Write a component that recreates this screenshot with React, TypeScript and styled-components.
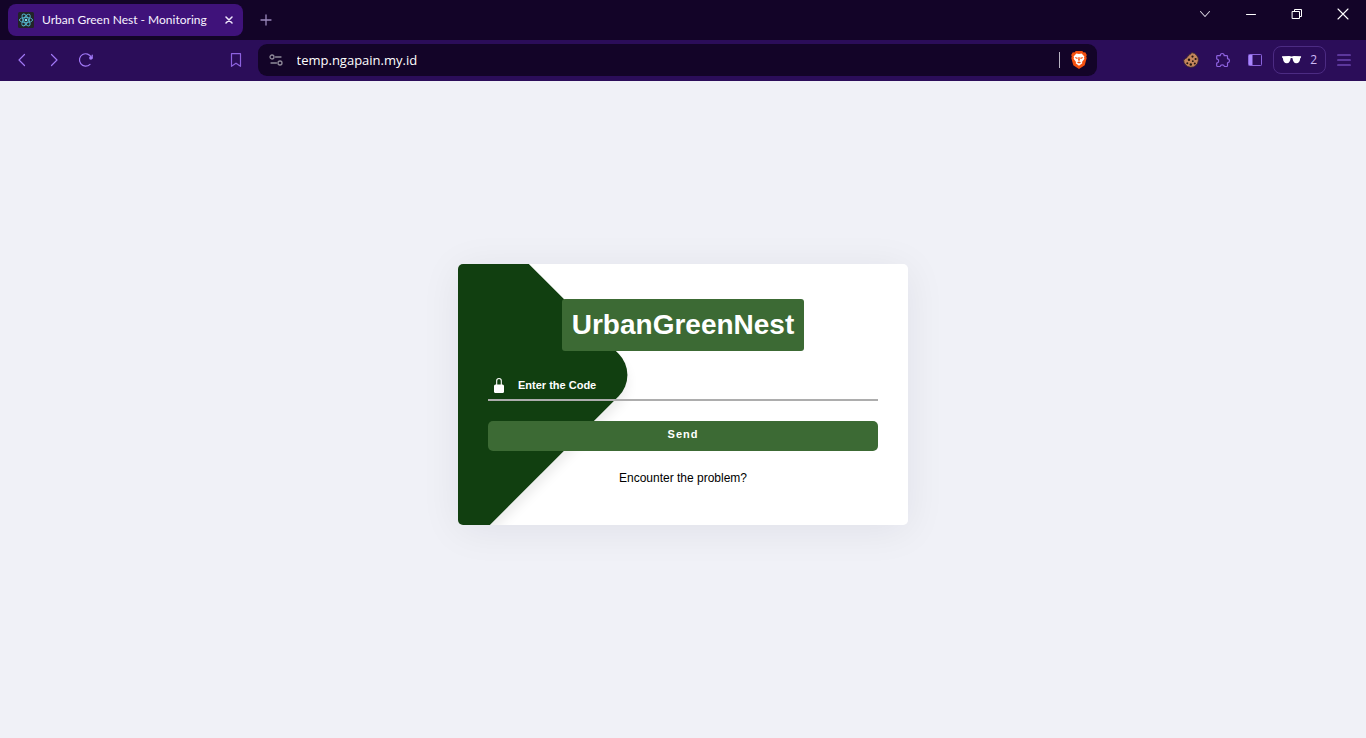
import React from "react";
import styled, { createGlobalStyle } from "styled-components";

const uiFont = `"Open Sans", "Noto Sans", sans-serif`;
const tabFont = `Lato, "Open Sans", sans-serif`;
const pageFont = `"Liberation Sans", Arial, sans-serif`;

const GlobalStyle = createGlobalStyle`
  *, *::before, *::after { box-sizing: border-box; }
  body { margin: 0; background: #f0f1f7; }
`;

const Window = styled.div`
  display: flex;
  flex-direction: column;
  min-height: 100vh;
`;

const TitleBar = styled.header`
  display: flex;
  align-items: flex-start;
  height: 40px;
  padding-left: 8px;
  background: #130428;
`;

const Tab = styled.div`
  display: flex;
  align-items: center;
  width: 235px;
  height: 32px;
  margin-top: 4px;
  padding: 0 6px 0 10px;
  border-radius: 8px;
  background: #3f127a;
  color: #f8f3ff;
  font: 12px/16px ${tabFont};
`;

const TabTitle = styled.span`
  flex: 1;
  padding-left: 8px;
  white-space: nowrap;
`;

const IconButton = styled.button<{ $width?: number; $height?: number; $color?: string }>`
  display: flex;
  flex: none;
  align-items: center;
  justify-content: center;
  width: ${(p) => p.$width ?? 32}px;
  height: ${(p) => p.$height ?? 32}px;
  padding: 0;
  border: 0;
  background: none;
  color: ${(p) => p.$color ?? "#a078f5"};
`;

const NewTab = styled(IconButton)`
  margin: 4px 0 0 7px;
`;

const WindowControls = styled.div`
  display: flex;
  margin-left: auto;
`;

const Toolbar = styled.nav`
  display: flex;
  align-items: center;
  height: 41px;
  padding: 0 6px 1px;
  background: #2b0d59;
`;

const Spacer = styled.div<{ $grow: number }>`
  flex: ${(p) => p.$grow} 1 0;
`;

const AddressBar = styled.div`
  display: flex;
  flex: 839 1 0;
  align-items: center;
  height: 32px;
  margin-left: 6px;
  padding: 0 2px;
  border-radius: 9px;
  background: #130428;
`;

const AddressInput = styled.input`
  flex: 1;
  min-width: 0;
  padding: 0 0 0 5px;
  border: 0;
  outline: 0;
  background: none;
  color: #fff;
  font: 13px/20px ${uiFont};
`;

const Divider = styled.span`
  width: 1px;
  height: 16px;
  margin-right: 3px;
  background: #b9b4c2;
`;

const PrivatePill = styled.button`
  display: flex;
  align-items: center;
  gap: 8px;
  width: 53px;
  height: 28px;
  margin: 0 2px;
  padding: 0 8px 0 7px;
  border: 1px solid #4c2b83;
  border-radius: 8px;
  background: none;
  color: #cdb8f5;
  font: 12px/16px ${uiFont};
`;

const Page = styled.main`
  display: flex;
  flex: 1;
  align-items: center;
  justify-content: center;
  padding-bottom: 30px;
  font-family: ${pageFont};
`;

const Card = styled.form`
  position: relative;
  display: flex;
  flex-direction: column;
  align-items: center;
  width: 100%;
  padding: 35px 30px 39px;
  overflow: hidden;
  border-radius: 5px;
  background: #fff;
`;

const CardShadow = styled.div`
  width: 450px;
  max-width: 100%;
  border-radius: 5px;
  box-shadow: 0 5px 40px rgba(20, 20, 40, 0.07);
`;

const Wedge = styled.div`
  position: absolute;
  top: -89px;
  left: -301px;
  width: 400px;
  height: 400px;
  border-radius: 0 30px 0 0;
  background: #113f10;
  box-shadow: 6px 6px 12px rgba(0, 0, 0, 0.08);
  transform: rotate(45deg);
`;

const Title = styled.h1`
  position: relative;
  margin: 0 0 19px;
  padding: 10px;
  border-radius: 3px;
  background: #3c6a34;
  color: #fff;
  font-size: 28px;
  font-weight: 700;
  line-height: 32px;
`;

const Field = styled.label`
  position: relative;
  display: flex;
  align-items: center;
  width: 100%;
  height: 31px;
  margin-bottom: 20px;
  padding-left: 5px;
  border-bottom: 2px solid #adadad;
`;

const CodeInput = styled.input`
  flex: 1;
  min-width: 0;
  margin-left: 13px;
  padding: 0;
  border: 0;
  outline: 0;
  background: none;
  color: #fff;
  font: 700 11px/16px ${pageFont};

  &::placeholder {
    color: #fff;
    opacity: 1;
  }
`;

const SendButton = styled.button`
  position: relative;
  width: 100%;
  height: 30px;
  margin-bottom: 19px;
  padding: 0 0 4px;
  border: 0;
  border-radius: 5px;
  background: #3c6a34;
  color: #fff;
  font: 700 11px/16px ${pageFont};
  letter-spacing: 1px;
`;

const HelpLink = styled.a`
  position: relative;
  color: #000;
  font-size: 12px;
  line-height: 16px;
  text-decoration: none;
`;

type LineIconProps = { size: number; d: string; width?: number };

const LineIcon = ({ size, d, width = 1.2 }: LineIconProps) => (
  <svg width={size} height={size} viewBox={`0 0 ${size} ${size}`} fill="none" stroke="currentColor" strokeWidth={width} strokeLinecap="round" strokeLinejoin="round" aria-hidden="true">
    <path d={d} />
  </svg>
);

const ReactLogo = () => (
  <svg width="16" height="16" viewBox="0 0 16 16" fill="none" stroke="#53b5ce" strokeWidth="0.9" aria-hidden="true">
    <rect width="16" height="16" rx="1.5" fill="#222428" stroke="none" />
    <ellipse cx="8" cy="8" rx="6.6" ry="2.6" />
    <ellipse cx="8" cy="8" rx="6.6" ry="2.6" transform="rotate(60 8 8)" />
    <ellipse cx="8" cy="8" rx="6.6" ry="2.6" transform="rotate(120 8 8)" />
    <circle cx="8" cy="8" r="1.3" fill="#7fe0f5" stroke="none" />
  </svg>
);

const ReloadIcon = () => (
  <svg width="16" height="16" viewBox="0 0 16 16" fill="none" stroke="currentColor" strokeWidth="1.2" strokeLinecap="round" aria-hidden="true">
    <path d="M12 12.400A6.200 6.200 0 1 1 13.400 5.600" />
    <path d="M14.200 3.200v3" />
    <circle cx="12.800" cy="6" r="1.700" fill="currentColor" stroke="none" />
  </svg>
);

const SiteSettingsIcon = () => (
  <svg width="14" height="14" viewBox="0 0 14 14" fill="none" stroke="#8f8a99" strokeWidth="1.3" strokeLinecap="round" aria-hidden="true">
    <circle cx="3" cy="4" r="2" />
    <path d="M6.500 4h5.500M2 10h5.500" />
    <circle cx="11" cy="10" r="2" />
  </svg>
);

const BraveLogo = () => (
  <svg width="16" height="18" viewBox="0 0 16 18" aria-hidden="true">
    <path d="M4.8 0h6.4l1.4 1.5 1.6-.2L15.8 4l-.6 1.6.5 1.5-2 7.2L8 18l-5.7-3.7-2-7.2.5-1.5L.2 4l1.6-2.7 1.6.2Z" fill="#f5500f" />
    <path d="M8 3.1 10.6 2.6 13.400 5.5l-.4 1.2.4 1-2.400 3.300.3 1.2L8 14.8l-3.300-2.600.3-1.200L2.600 7.7l.4-1L2.600 5.5l2.800-2.900Z" fill="#fff" />
    <path d="M3.800 6.100 6.800 6.800 6.400 8 4.800 7.600ZM12.200 6.100 9.200 6.800 9.600 8l1.600-.4ZM7.500 6h1l.4 3L8 10.200 7.100 9ZM5.800 11.200 8 10.600l2.200.6L8 12.600Z" fill="#f5500f" />
  </svg>
);

const CookieIcon = () => (
  <svg width="16" height="16" viewBox="0 0 16 16" aria-hidden="true">
    <path d="M8.800.6A7.400 7.400 0 1 1 .6 7.800C1.600 7.600 2.300 7 2.600 6.200 3.800 6.200 4.500 5.300 4.300 4.200 5.600 4.300 6.300 3.400 5.900 2.300 7.300 2.600 8.300 1.800 8.800.6Z" fill="#c4855c" stroke="#3a2733" strokeWidth="0.9" />
    <g fill="#22150f">
      <circle cx="9.500" cy="4.600" r="1.100" />
      <circle cx="6" cy="7.800" r="1.200" />
      <circle cx="12.600" cy="7" r="1.100" />
      <circle cx="9.800" cy="9.200" r="0.900" />
      <circle cx="4.300" cy="11.200" r="1" />
      <circle cx="7.800" cy="12.500" r="1.200" />
      <circle cx="11.800" cy="11.600" r="1" />
    </g>
  </svg>
);

const SidebarIcon = () => (
  <svg width="14" height="12" viewBox="0 0 14 12" aria-hidden="true">
    <rect x="0.5" y="0.5" width="13" height="11" rx="0.8" fill="none" stroke="#8a63dc" />
    <path d="M1 1h3.500v10H1Z" fill="#a987ff" />
  </svg>
);

const GlassesIcon = () => (
  <svg width="22" height="10" viewBox="0 0 22 10" fill="#fff" aria-hidden="true">
    <path d="M1 1.200 8.500.9Q11 1.800 13.500.9L21 1.200 20.600 3 20 3.200C19.800 6.800 18.200 8.600 15.900 8.500 13.500 8.400 12.300 6.200 12 3.200Q11 2.400 10 3.200C9.700 6.200 8.500 8.400 6.100 8.500 3.800 8.600 2.200 6.800 2 3.200L1.400 3Z" />
  </svg>
);

const LockIcon = () => (
  <svg width="12" height="16" viewBox="0 0 12 16" aria-hidden="true">
    <path d="M3.700 8V3.800a2.300 2.300 0 0 1 4.600 0V8" fill="none" stroke="#fff" strokeWidth="1.100" />
    <rect x="1" y="7.500" width="10" height="8.500" rx="1.500" fill="#fff" />
  </svg>
);

export default function App() {
  return (
    <Window>
      <GlobalStyle />
      <TitleBar>
        <Tab>
          <ReactLogo />
          <TabTitle>Urban Green Nest - Monitoring</TabTitle>
          <IconButton $width={16} $height={16} $color="#f0e8fc" aria-label="Close tab">
            <LineIcon size={8} d="M1 1l6 6M7 1 1 7" width={1.5} />
          </IconButton>
        </Tab>
        <NewTab $color="#9a88bb" aria-label="New tab">
          <LineIcon size={12} d="M6 1v10M1 6h10" width={1.3} />
        </NewTab>
        <WindowControls>
          <IconButton $width={46} $height={28} $color="#d5d0dc" aria-label="Search tabs">
            <LineIcon size={12} d="M1.500 3.500 6 8.500 10.500 3.500" width={1.1} />
          </IconButton>
          <IconButton $width={46} $height={28} $color="#fff" aria-label="Minimize">
            <LineIcon size={12} d="M1.500 6.500h9" width={1} />
          </IconButton>
          <IconButton $width={46} $height={28} $color="#fff" aria-label="Restore">
            <LineIcon size={12} d="M1.500 3.500h7v7h-7ZM3.500 3.500v-2h7v7h-2" width={1} />
          </IconButton>
          <IconButton $width={46} $height={28} $color="#fff" aria-label="Close window">
            <LineIcon size={12} d="M1 1l10 10M11 1 1 11" width={1.1} />
          </IconButton>
        </WindowControls>
      </TitleBar>

      <Toolbar aria-label="Browser">
        <IconButton aria-label="Back">
          <LineIcon size={14} d="M9.500 1.500 4 7l5.500 5.500" />
        </IconButton>
        <IconButton aria-label="Forward">
          <LineIcon size={14} d="M4.500 1.500 10 7l-5.500 5.500" />
        </IconButton>
        <IconButton aria-label="Reload">
          <ReloadIcon />
        </IconButton>
        <Spacer $grow={118} />
        <IconButton $color="#8d62df" aria-label="Bookmark this page">
          <LineIcon size={14} d="M2.500.7h9v12.600L7 10.200l-4.500 3.100Z" />
        </IconButton>
        <AddressBar>
          <IconButton aria-label="Site settings">
            <SiteSettingsIcon />
          </IconButton>
          <AddressInput aria-label="Address" defaultValue="temp.ngapain.my.id" />
          <Divider />
          <IconButton aria-label="Shields">
            <BraveLogo />
          </IconButton>
        </AddressBar>
        <Spacer $grow={78} />
        <IconButton aria-label="Cookies">
          <CookieIcon />
        </IconButton>
        <IconButton $color="#8d62df" aria-label="Extensions">
          <LineIcon size={16} d="M2.500 3.700H5.200C5.200 2.300 5.900 1.500 7.200 1.500S9.200 2.300 9.200 3.700H11.700Q12.500 3.700 12.500 4.500V6.700C13.800 6.900 14.500 7.700 14.500 8.800S13.800 10.700 12.500 10.900V13.700Q12.500 14.500 11.700 14.500H9.400C9.200 13.400 8.400 12.900 7.300 12.900S5.400 13.400 5.200 14.500H2.500Q1.700 14.500 1.700 13.700V11.200C3 10.900 3.700 10.100 3.700 9S3 7.100 1.700 6.800V4.500Q1.700 3.700 2.500 3.700Z" />
        </IconButton>
        <IconButton aria-label="Sidebar">
          <SidebarIcon />
        </IconButton>
        <PrivatePill aria-label="Private windows">
          <GlassesIcon />
          <span>2</span>
        </PrivatePill>
        <IconButton $color="#8d62df" aria-label="Menu">
          <LineIcon size={14} d="M.7 2h12.600M.7 7h12.600M.7 12h12.600" />
        </IconButton>
      </Toolbar>

      <Page>
        <CardShadow>
          <Card onSubmit={(e: React.FormEvent) => e.preventDefault()}>
            <Wedge />
            <Title>UrbanGreenNest</Title>
            <Field>
              <LockIcon />
              <CodeInput type="text" placeholder="Enter the Code" aria-label="Enter the Code" />
            </Field>
            <SendButton type="submit">Send</SendButton>
            <HelpLink href="#help">Encounter the problem?</HelpLink>
          </Card>
        </CardShadow>
      </Page>
    </Window>
  );
}
